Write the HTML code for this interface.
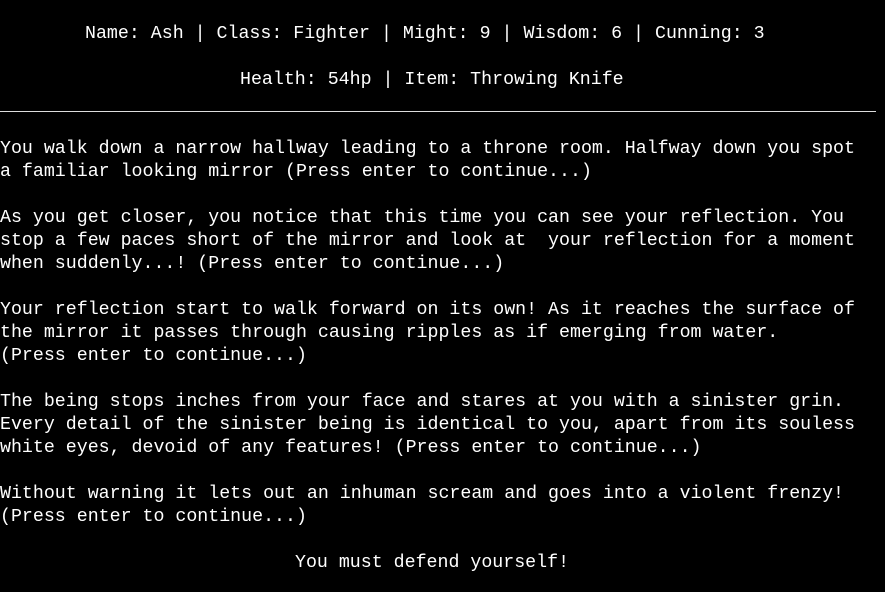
<!DOCTYPE html>
<html><head><meta charset="utf-8"><style>
html,body{margin:0;padding:0;background:#000;width:885px;height:592px;overflow:hidden}
.l{position:absolute;left:0;white-space:pre;color:#fff;font-family:"Liberation Mono",monospace;font-size:18.27px;line-height:23px;height:23px}
.hr{position:absolute;left:0;top:111px;width:876px;height:1px;background:#ddd}
</style></head><body>
<div class="l" style="left:85px;top:23px">Name: Ash | Class: Fighter | Might: 9 | Wisdom: 6 | Cunning: 3</div>
<div class="l" style="left:240px;top:69px">Health: 54hp | Item: Throwing Knife</div>
<div class="hr"></div>
<div class="l" style="top:138px">You walk down a narrow hallway leading to a throne room. Halfway down you spot</div>
<div class="l" style="top:161px">a familiar looking mirror (Press enter to continue...)</div>
<div class="l" style="top:207px">As you get closer, you notice that this time you can see your reflection. You</div>
<div class="l" style="top:230px">stop a few paces short of the mirror and look at  your reflection for a moment</div>
<div class="l" style="top:253px">when suddenly...! (Press enter to continue...)</div>
<div class="l" style="top:299px">Your reflection start to walk forward on its own! As it reaches the surface of</div>
<div class="l" style="top:322px">the mirror it passes through causing ripples as if emerging from water.</div>
<div class="l" style="top:345px">(Press enter to continue...)</div>
<div class="l" style="top:391px">The being stops inches from your face and stares at you with a sinister grin.</div>
<div class="l" style="top:414px">Every detail of the sinister being is identical to you, apart from its souless</div>
<div class="l" style="top:437px">white eyes, devoid of any features! (Press enter to continue...)</div>
<div class="l" style="top:483px">Without warning it lets out an inhuman scream and goes into a violent frenzy!</div>
<div class="l" style="top:506px">(Press enter to continue...)</div>
<div class="l" style="left:295px;top:552px">You must defend yourself!</div>
</body></html>
